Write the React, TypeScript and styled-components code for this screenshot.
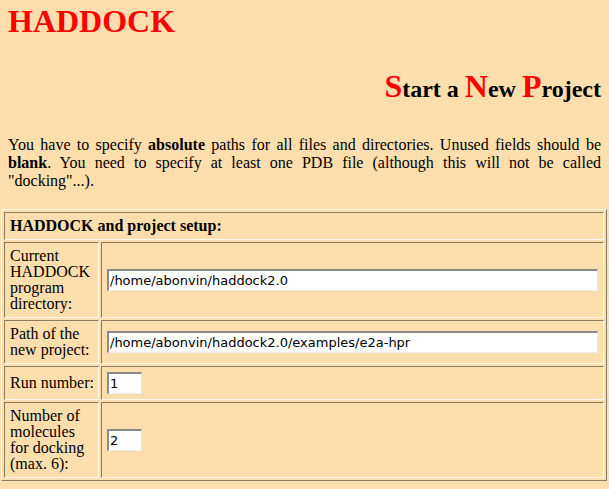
import React from "react";
import styled, { createGlobalStyle } from "styled-components";

const GlobalStyle = createGlobalStyle`
  html, body {
    margin: 0;
    background: #ffdead;
  }
  body {
    font-family: "Liberation Serif", "Times New Roman", serif;
    font-size: 16px;
    color: #000;
  }
`;

const Page = styled.div`
  padding: 3px 8px 0;
`;

const Title = styled.h1`
  margin: 0;
  font-size: 32px;
  line-height: 36px;
  font-weight: bold;
  color: #ff0000;
`;

const Subtitle = styled.h2`
  margin: 29px 0 0;
  text-align: right;
  font-size: 24px;
  line-height: 36px;
  font-weight: bold;
`;

const Initial = styled.span`
  font-size: 32px;
  color: #ff0000;
`;

const Intro = styled.p`
  margin: 29px 0 19px;
  line-height: 18px;
  text-align: justify;
`;

const SetupTable = styled.table`
  width: calc(100% + 13px);
  margin-left: -7px;
  border-collapse: separate;
  border-spacing: 2px;
  border: 1px solid;
  border-color: #fff8ec #8c7b63 #8c7b63 #fff8ec;
`;

const Cell = styled.td`
  padding: 5px;
  line-height: 16px;
  vertical-align: middle;
  border: 1px solid;
  border-color: #8c7b63 #fff8ec #fff8ec #8c7b63;
`;

const HeaderCell = styled(Cell)`
  font-weight: bold;
`;

const LabelCell = styled(Cell)`
  width: 84px;
  padding-right: 4px;
`;

const TextField = styled.input<{ $wide?: boolean }>`
  box-sizing: border-box;
  display: block;
  width: ${(p) => (p.$wide ? "100%" : "35px")};
  height: 22px;
  margin: 0;
  padding: 0 2px 0 1px;
  background: #fff;
  border-style: solid;
  border-width: 2px 1px 1px 2px;
  border-color: #8a8a8a #e4e4e4 #ececec #8a8a8a;
  font-family: "DejaVu Sans", "Liberation Sans", sans-serif;
  font-size: 13px;
  color: #000;
  outline: none;
`;

const fields = [
  { label: "Current HADDOCK program directory:", value: "/home/abonvin/haddock2.0", wide: true },
  { label: "Path of the new project:", value: "/home/abonvin/haddock2.0/examples/e2a-hpr", wide: true },
  { label: "Run number:", value: "1", wide: false },
  { label: "Number of molecules for docking (max. 6):", value: "2", wide: false },
];

const App = () => {
  return (
    <Page>
      <GlobalStyle />
      <Title>HADDOCK</Title>
      <Subtitle>
        <Initial>S</Initial>tart a <Initial>N</Initial>ew <Initial>P</Initial>roject
      </Subtitle>
      <Intro>
        You have to specify <b>absolute</b> paths for all files and directories. Unused fields
        should be <b>blank</b>. You need to specify at least one PDB file (although this will not
        be called "docking"...).
      </Intro>
      <SetupTable>
        <tbody>
          <tr>
            <HeaderCell colSpan={2}>HADDOCK and project setup:</HeaderCell>
          </tr>
          {fields.map((f) => (
            <tr key={f.label}>
              <LabelCell>{f.label}</LabelCell>
              <Cell>
                <TextField type="text" defaultValue={f.value} $wide={f.wide} />
              </Cell>
            </tr>
          ))}
        </tbody>
      </SetupTable>
    </Page>
  );
};

export default App;
